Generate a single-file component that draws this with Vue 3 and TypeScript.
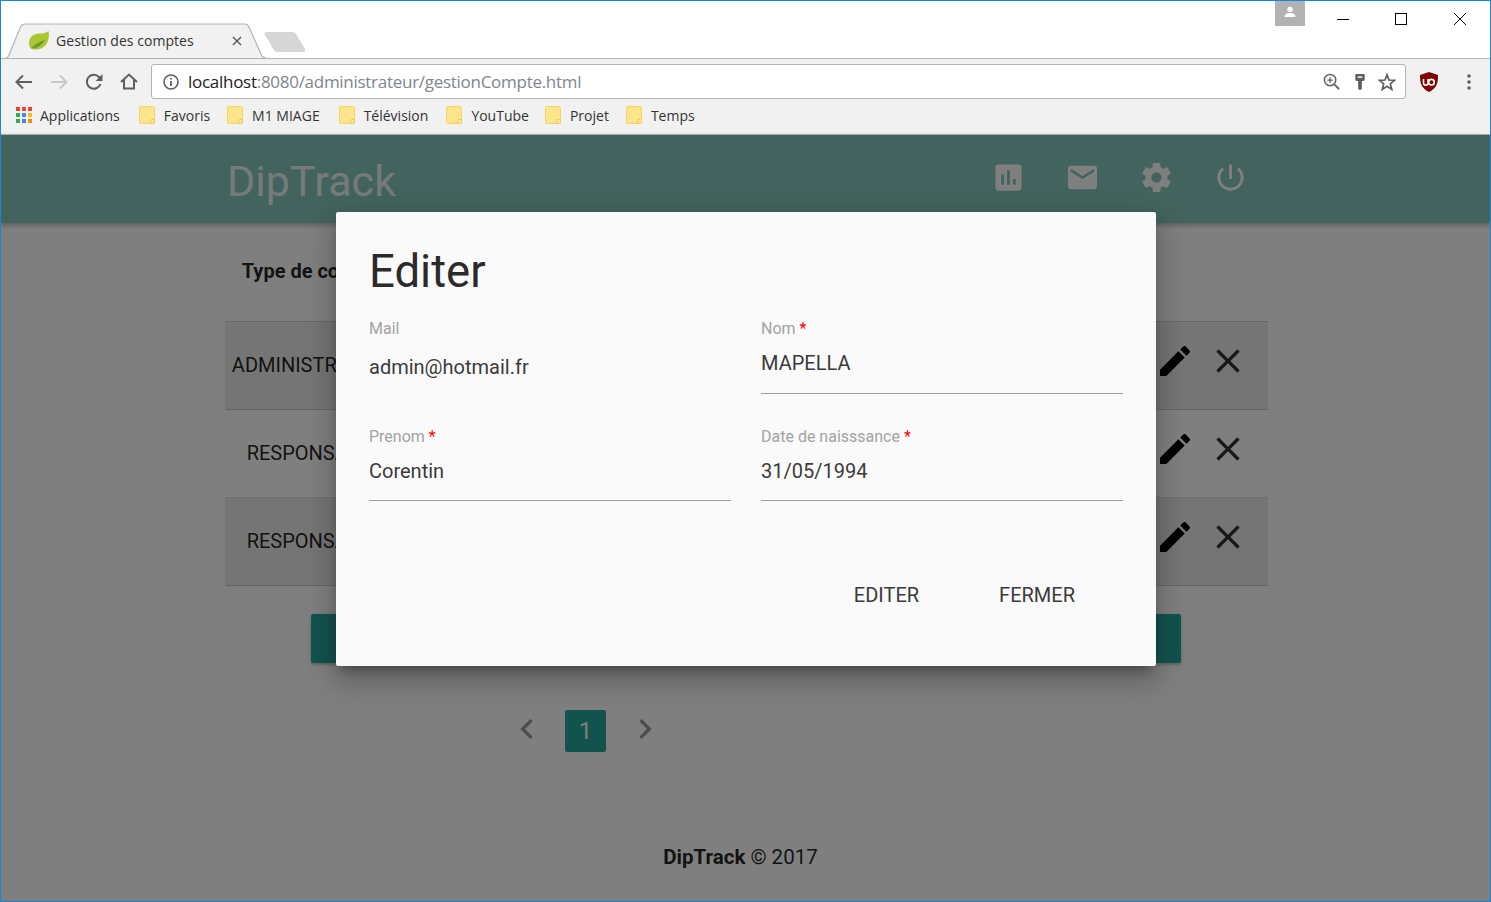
<script setup lang="ts">
const bookmarks: { label: string; gap: number }[] = [
  { label: 'Favoris', gap: 17 },
  { label: 'M1 MIAGE', gap: 19 },
  { label: 'Télévision', gap: 18 },
  { label: 'YouTube', gap: 16 },
  { label: 'Projet', gap: 17 },
  { label: 'Temps', gap: 0 },
]
const rows = [
  { type: 'ADMINISTRATEUR', alt: true },
  { type: 'RESPONSABLE', alt: false },
  { type: 'RESPONSABLE', alt: true },
]
const appColors = ['#ea4335','#ea4335','#ea4335','#34a853','#4285f4','#fbbc05','#34a853','#4285f4','#fb8c00']
const iconPaths = {
  chart: 'M19 3H5c-1.1 0-2 .9-2 2v14c0 1.1.9 2 2 2h14c1.1 0 2-.9 2-2V5c0-1.1-.9-2-2-2zM9 17H7v-7h2v7zm4 0h-2V7h2v10zm4 0h-2v-4h2v4z',
  mail: 'M20 4H4c-1.1 0-1.99.9-1.99 2L2 18c0 1.1.9 2 2 2h16c1.1 0 2-.9 2-2V6c0-1.1-.9-2-2-2zm0 4l-8 5-8-5V6l8 5 8-5v2z',
  gear: 'M19.43 12.98c.04-.32.07-.64.07-.98s-.03-.66-.07-.98l2.11-1.65c.19-.15.24-.42.12-.64l-2-3.46c-.12-.22-.39-.3-.61-.22l-2.49 1c-.52-.4-1.08-.73-1.69-.98l-.38-2.65C14.46 2.18 14.25 2 14 2h-4c-.25 0-.46.18-.49.42l-.38 2.65c-.61.25-1.17.59-1.69.98l-2.49-1c-.23-.09-.49 0-.61.22l-2 3.46c-.13.22-.07.49.12.64l2.11 1.65c-.04.32-.07.65-.07.98s.03.66.07.98l-2.11 1.65c-.19.15-.24.42-.12.64l2 3.46c.12.22.39.3.61.22l2.49-1c.52.4 1.08.73 1.69.98l.38 2.65c.03.24.24.42.49.42h4c.25 0 .46-.18.49-.42l.38-2.65c.61-.25 1.17-.59 1.69-.98l2.49 1c.23.09.49 0 .61-.22l2-3.46c.12-.22.07-.49-.12-.64l-2.11-1.65zM12 15.5c-1.93 0-3.5-1.57-3.5-3.5s1.57-3.5 3.5-3.5 3.5 1.57 3.5 3.5-1.57 3.5-3.5 3.5z',
  power: 'M13 3h-2v10h2V3zm4.83 2.17l-1.42 1.42C17.99 7.86 19 9.81 19 12c0 3.87-3.13 7-7 7s-7-3.13-7-7c0-2.19 1.01-4.14 2.58-5.42L6.17 5.17C4.23 6.82 3 9.26 3 12c0 4.97 4.03 9 9 9s9-4.03 9-9c0-2.74-1.23-5.18-3.17-6.83z',
}
const navIcons = [iconPaths.chart, iconPaths.mail, iconPaths.gear, iconPaths.power]
</script>

<template>
  <div class="window">
    <div class="titlebar">
      <div class="tab">
        <svg class="tab-shape" width="262" height="36" viewBox="0 0 262 36">
          <path d="M0 35 H1.5 C2.5 35 3 34 3.5 33 L15.5 4 C16.5 2 18 1 20 1 H240 C242 1 243 2 244 4 L256 31 C257 34 258 35 261 35" fill="#f1f1f1" stroke="#b4b4b4" stroke-width="1.2" />
        </svg>
        <svg class="leaf" width="20" height="19" viewBox="0 0 20 19">
          <path d="M0 12 C0 6 5 2.5 10 2.5 C14 2.5 17 2 19.5 0 C20.5 6 19.5 13 14 16.5 C10 19 4 19 2 17.5 C.8 16.5 0 14.5 0 12 Z" fill="#a8c733" />
          <path d="M2 17.5 C7 12.5 11 10.5 16 9 C13 14 8 17.5 2 17.5 Z" fill="#6b9a2e" />
        </svg>
        <span class="tab-title">Gestion des comptes</span>
        <svg class="tab-close" width="10" height="10" viewBox="0 0 10 10"><path d="M1 1 L9 9 M9 1 L1 9" stroke="#555" stroke-width="1.4" /></svg>
      </div>
      <svg class="newtab" width="44" height="22" viewBox="0 0 44 22"><path d="M4 1 H30 C31 1 32 2 33 3 L42 18 C43 20 42 21 40 21 H14 C13 21 12 20 11 19 L2 4 C1 2 2 1 4 1 Z" fill="#d6d6d6" /></svg>
      <div class="winctl">
        <div class="profile">
          <svg width="14" height="12" viewBox="0 0 14 12"><circle cx="7" cy="3.4" r="2.7" fill="#fff" /><path d="M1.5 11 C1.5 8 4 7 7 7 C10 7 12.5 8 12.5 11 Z" fill="#fff" /></svg>
        </div>
        <svg class="ctl min" width="12" height="12" viewBox="0 0 12 12"><path d="M0 6.5 H12" stroke="#000" /></svg>
        <svg class="ctl max" width="12" height="12" viewBox="0 0 12 12"><rect x=".5" y=".5" width="11" height="11" fill="none" stroke="#000" /></svg>
        <svg class="ctl cls" width="12" height="12" viewBox="0 0 12 12"><path d="M0 0 L12 12 M12 0 L0 12" stroke="#000" /></svg>
      </div>
    </div>

    <div class="toolbar">
      <svg class="tb" width="18" height="16" viewBox="0 0 18 16"><path d="M17 8 H2 M8 1.5 L1.5 8 L8 14.5" fill="none" stroke="#5f5f5f" stroke-width="2" /></svg>
      <svg class="tb" width="18" height="16" viewBox="0 0 18 16"><path d="M1 8 H16 M10 1.5 L16.5 8 L10 14.5" fill="none" stroke="#c8c8c8" stroke-width="2" /></svg>
      <svg class="tb" width="18" height="18" viewBox="0 0 18 18"><path d="M15.5 11 A7 7 0 1 1 14 4 L16 6" fill="none" stroke="#5f5f5f" stroke-width="2" /><path d="M17.5 1 V8 H10.5 Z" fill="#5f5f5f" /></svg>
      <svg class="tb" width="18" height="17" viewBox="0 0 18 17"><path d="M1 9 L9 1.5 L17 9 M4 7 V15.5 H14 V7" fill="none" stroke="#5f5f5f" stroke-width="2" /></svg>
      <div class="omnibox">
        <svg class="info" width="16" height="16" viewBox="0 0 16 16"><circle cx="8" cy="8" r="7" fill="none" stroke="#5f5f5f" stroke-width="1.6" /><path d="M8 7 V12 M8 4 V5.6" stroke="#5f5f5f" stroke-width="1.8" /></svg>
        <span class="url"><span class="host">localhost</span>:8080/administrateur/gestionCompte.html</span>
        <svg class="zoomi" width="17" height="17" viewBox="0 0 18 18"><circle cx="7.5" cy="7.5" r="6" fill="none" stroke="#5f5f5f" stroke-width="1.6" /><path d="M12 12 L17 17" stroke="#5f5f5f" stroke-width="2" /><path d="M4.5 7.5 H10.5 M7.5 4.5 V10.5" stroke="#5f5f5f" stroke-width="1.3" /></svg>
        <svg class="key" width="10" height="16" viewBox="0 0 10 17"><path d="M1 0 H9 C9.6 0 10 .4 10 1 V6 C10 7 9 7.5 7 7.5 V16 L5 17 L3 16 V7.5 C1 7.5 0 7 0 6 V1 C0 .4 .4 0 1 0 Z" fill="#5f5f5f" /><rect x="2.5" y="2.5" width="5" height="1.6" fill="#f1f1f1" /></svg>
        <svg class="star" width="18" height="18" viewBox="0 0 18 18"><path d="M9 1.8 L11 7 L16.7 7.3 L12.3 10.9 L13.8 16.4 L9 13.3 L4.2 16.4 L5.7 10.9 L1.3 7.3 L7 7 Z" fill="none" stroke="#5f5f5f" stroke-width="1.7" /></svg>
      </div>
      <svg class="shield" width="18" height="20" viewBox="0 0 18 20"><path d="M9 0 L18 3 C18 11 17 16 9 20 C1 16 0 11 0 3 Z" fill="#800000" /><path d="M3.5 7 V11 C3.5 14 8 14 8 11 V7" fill="none" stroke="#fff" stroke-width="1.6" /><circle cx="11.5" cy="10.2" r="2.8" fill="none" stroke="#fff" stroke-width="1.6" /></svg>
      <svg class="dots" width="4" height="16" viewBox="0 0 4 16"><circle cx="2" cy="2" r="1.8" fill="#5f5f5f" /><circle cx="2" cy="8" r="1.8" fill="#5f5f5f" /><circle cx="2" cy="14" r="1.8" fill="#5f5f5f" /></svg>
    </div>

    <div class="bookmarks">
      <div class="bm apps-bm">
        <span class="apps"><i v-for="(c, i) in appColors" :key="i" :style="{ background: c }"></i></span>
        <span>Applications</span>
      </div>
      <div v-for="b in bookmarks" :key="b.label" class="bm" :style="{ marginRight: b.gap + 'px' }">
        <svg width="16" height="18" viewBox="0 0 16 18"><path d="M1.5 0.5 H14 C14.8 0.5 15.5 1.2 15.5 2 V14 L12 17.5 H1.5 C.9 17.5 .5 17 .5 16.5 V1.5 C.5 1 .9 .5 1.5 .5 Z" fill="#fde58b" stroke="#f6d463" /><rect x="11.5" y="13.5" width="4" height="4" rx="1" fill="#fde58b" stroke="#f0c850" /></svg>
        <span>{{ b.label }}</span>
      </div>
    </div>

    <div class="page">
      <header class="appbar">
        <span class="brand">DipTrack</span>
        <nav class="nav">
          <svg v-for="(p, i) in navIcons" :key="i" width="35" height="35" viewBox="0 0 24 24"><path :d="p" fill="#fff" /></svg>
        </nav>
      </header>

      <main class="content">
        <div class="thead">Type de compte</div>
        <div v-for="(r, i) in rows" :key="i" class="row" :class="{ alt: r.alt }">
          <span class="cell">{{ r.type }}</span>
          <div class="actions">
            <svg width="40" height="40" viewBox="0 0 24 24"><path d="M3 17.25V21h3.75L17.81 9.94l-3.75-3.75L3 17.25zM20.71 7.04c.39-.39.39-1.02 0-1.41l-2.34-2.34c-.39-.39-1.02-.39-1.41 0l-1.83 1.83 3.75 3.75 1.83-1.83z" fill="#000" /></svg>
            <svg width="40" height="40" viewBox="0 0 24 24"><path d="M19 6.41L17.59 5 12 10.59 6.41 5 5 6.41 10.59 12 5 17.59 6.41 19 12 13.41 17.59 19 19 17.59 13.41 12z" fill="#333" /></svg>
          </div>
        </div>
        <div class="wide-btn"></div>
        <div class="pager">
          <svg width="40" height="40" viewBox="0 0 24 24"><path d="M15.41 7.41L14 6l-6 6 6 6 1.41-1.41L10.83 12z" fill="#999" /></svg>
          <span class="pg">1</span>
          <svg width="40" height="40" viewBox="0 0 24 24"><path d="M10 6L8.59 7.41 13.17 12l-4.58 4.58L10 18l6-6z" fill="#999" /></svg>
        </div>
      </main>

      <footer class="foot"><b>DipTrack</b> © 2017</footer>

      <div class="overlay"></div>

      <section class="modal">
        <h4 class="m-title">Editer</h4>
        <div class="fields">
          <div class="field plain">
            <label>Mail</label>
            <div class="value">admin@hotmail.fr</div>
          </div>
          <div class="field">
            <label>Nom <em>*</em></label>
            <div class="value">MAPELLA</div>
          </div>
          <div class="field second">
            <label>Prenom <em>*</em></label>
            <div class="value">Corentin</div>
          </div>
          <div class="field second">
            <label>Date de naisssance <em>*</em></label>
            <div class="value">31/05/1994</div>
          </div>
        </div>
        <div class="m-actions">
          <span>EDITER</span>
          <span>FERMER</span>
        </div>
      </section>
    </div>
  </div>
</template>

<style>
html, body { margin: 0; padding: 0; overflow: hidden; }
</style>

<style scoped>
.window {
  width: 1491px;
  height: 902px;
  box-sizing: border-box;
  border: 1px solid #1a84d6;
  background: #fff;
  display: flex;
  flex-direction: column;
  overflow: hidden;
  font-family: "Open Sans", "Noto Sans", sans-serif;
}
.titlebar {
  height: 58px;
  flex: none;
  display: flex;
  align-items: flex-end;
  position: relative;
  z-index: 1;
  background: linear-gradient(#fff 57px, #b4b4b4 57px);
}
.tab {
  position: relative;
  width: 262px;
  height: 36px;
  margin-left: 4px;
  display: flex;
  align-items: center;
  box-sizing: border-box;
  padding: 0 0 1px 24px;
  color: #333;
}
.tab-shape { position: absolute; left: 0; top: 0; }
.leaf { position: relative; flex: none; margin-right: 7px; }
.tab-title { position: relative; font-size: 14px; white-space: nowrap; width: 139px; letter-spacing: .05px; margin-top: -1px; }
.tab-close { position: relative; margin-left: 37px; }
.newtab { margin: 0 0 6px -4px; }
.winctl {
  margin-left: auto;
  align-self: flex-start;
  display: flex;
}
.profile {
  width: 30px;
  height: 25px;
  background: #b2b2b2;
  display: flex;
  align-items: center;
  justify-content: center;
  margin-right: 32px;
}
.profile svg { margin-top: -4px; }
.ctl { margin-top: 12px; flex: none; }
.min { margin-right: 46px; }
.max { margin-right: 47px; }
.cls { margin-right: 24px; }

.toolbar {
  height: 41px;
  flex: none;
  background: #f1f1f1;
  display: flex;
  align-items: center;
  box-sizing: border-box;
  padding: 4px 0 0 14px;
}
.tb { flex: none; margin-right: 17px; }
.omnibox {
  width: 1255px;
  height: 35px;
  box-sizing: border-box;
  margin-left: -4px;
  background: #fff;
  border: 1px solid #b4b4b4;
  border-radius: 3px;
  display: flex;
  align-items: center;
  padding-left: 11px;
}
.info { flex: none; margin-right: 9px; }
.url {
  font-size: 17px;
  color: #80868b;
  white-space: nowrap;
  letter-spacing: -0.28px;
  line-height: 33px;
}
.host { color: #222; }
.zoomi { margin-left: auto; margin-right: 15px; }
.key { margin-right: 13px; }
.star { margin-right: 9px; }
.shield { margin-left: 14px; flex: none; }
.dots { margin-left: 29px; flex: none; }

.bookmarks {
  height: 35px;
  flex: none;
  background: #f1f1f1;
  border-bottom: 1px solid #b4b4b4;
  box-sizing: border-box;
  display: flex;
  align-items: center;
  padding: 0 0 4px 15px;
  font-size: 14px;
  color: #333;
}
.bm { display: flex; align-items: center; gap: 9px; white-space: nowrap; }
.apps-bm { margin-right: 19px; gap: 8px; }
.apps {
  width: 16px;
  height: 16px;
  display: grid;
  grid-template-columns: repeat(3, 4px);
  grid-auto-rows: 4px;
  gap: 2px;
}
.apps i { display: block; }

.page {
  position: relative;
  flex: 1;
  min-height: 0;
  background: #fff;
  display: flex;
  flex-direction: column;
  font-family: Roboto, sans-serif;
}
.appbar {
  height: 88px;
  flex: none;
  background: #86c8bc;
  box-shadow: 0 2px 5px rgba(0, 0, 0, .3);
  display: flex;
  align-items: center;
  padding-left: 226px;
  box-sizing: border-box;
}
.brand {
  font-size: 43px;
  color: rgba(255, 255, 255, .85);
  letter-spacing: .1px;
  line-height: 88px;
  margin-top: 4px;
}
.nav {
  margin-left: auto;
  margin-right: 242px;
  display: flex;
  gap: 39px;
  margin-top: -3px;
}
.nav svg { flex: none; }

.content {
  margin-left: 224px;
  width: 1043px;
  flex: none;
}
.thead {
  height: 98px;
  width: 177px;
  padding-bottom: 2px;
  display: flex;
  align-items: center;
  justify-content: center;
  white-space: nowrap;
  font-size: 20px;
  font-weight: 700;
  color: rgba(0, 0, 0, .87);
  box-sizing: border-box;
}
.row {
  height: 88px;
  box-sizing: border-box;
  border-bottom: 1px solid rgba(0, 0, 0, .12);
  display: flex;
  align-items: center;
  justify-content: space-between;
  font-size: 20px;
  color: rgba(0, 0, 0, .87);
}
.row:nth-child(2) { height: 89px; border-top: 1px solid rgba(0, 0, 0, .12); }
.row.alt { background: #ebebeb; }
.cell { width: 179px; text-align: center; white-space: nowrap; margin-bottom: 2px; }
.actions {
  display: flex;
  gap: 13px;
  margin-right: 20px;
  margin-bottom: 10px;
}
.wide-btn {
  height: 49px;
  margin: 28px 87px 0 86px;
  background: #26a69a;
  border-radius: 2px;
  box-shadow: 0 2px 2px rgba(0, 0, 0, .14), 0 1px 5px rgba(0, 0, 0, .12);
}
.pager {
  display: flex;
  gap: 18px;
  align-items: flex-start;
  margin: 47px 0 0 282px;
}
.pager svg { margin-top: -1px; flex: none; }
.pager svg:last-child { margin-left: 1px; }
.pg {
  width: 41px;
  height: 42px;
  background: #26a69a;
  border-radius: 2px;
  color: #fff;
  font-size: 24px;
  display: flex;
  align-items: center;
  justify-content: center;
}
.foot {
  margin-top: 92px;
  text-align: center;
  margin-right: 10px;
  font-size: 20.5px;
  line-height: 26px;
  color: rgba(0, 0, 0, .87);
}
.foot b { font-weight: 700; }

.overlay {
  position: absolute;
  inset: 0;
  background: rgba(0, 0, 0, .5);
}
.modal {
  position: absolute;
  left: 335px;
  top: 77px;
  width: 820px;
  height: 454px;
  box-sizing: border-box;
  background: #fafafa;
  border-radius: 2px;
  padding: 26px 33px 0 33px;
  box-shadow: 0 16px 24px 2px rgba(0, 0, 0, .14), 0 6px 30px 5px rgba(0, 0, 0, .12), 0 8px 10px -5px rgba(0, 0, 0, .3);
}
.m-title {
  margin: 0;
  font-size: 45.5px;
  line-height: 68px;
  font-weight: 400;
  color: #2a2a2a;
}
.fields {
  margin-top: 13px;
  display: grid;
  grid-template-columns: 362px 362px;
  column-gap: 30px;
  row-gap: 33px;
}
.field {
  height: 75px;
  box-sizing: border-box;
  border-bottom: 1px solid #9e9e9e;
}
.field.second { height: 74px; }
.field.plain { border-bottom: 0; }
.field label {
  display: block;
  font-size: 16px;
  line-height: 20px;
  color: #a3a3a3;
}
.field em { font-style: normal; color: #f00; }
.value {
  font-size: 20px;
  line-height: 26px;
  margin-top: 11px;
  color: #3a3a3a;
}
.field.plain .value { margin-top: 15px; }
.m-actions {
  margin-top: 81px;
  display: flex;
  justify-content: flex-end;
  gap: 80px;
  padding-right: 48px;
  font-size: 20px;
  line-height: 26px;
  color: #3a3a3a;
}
</style>
